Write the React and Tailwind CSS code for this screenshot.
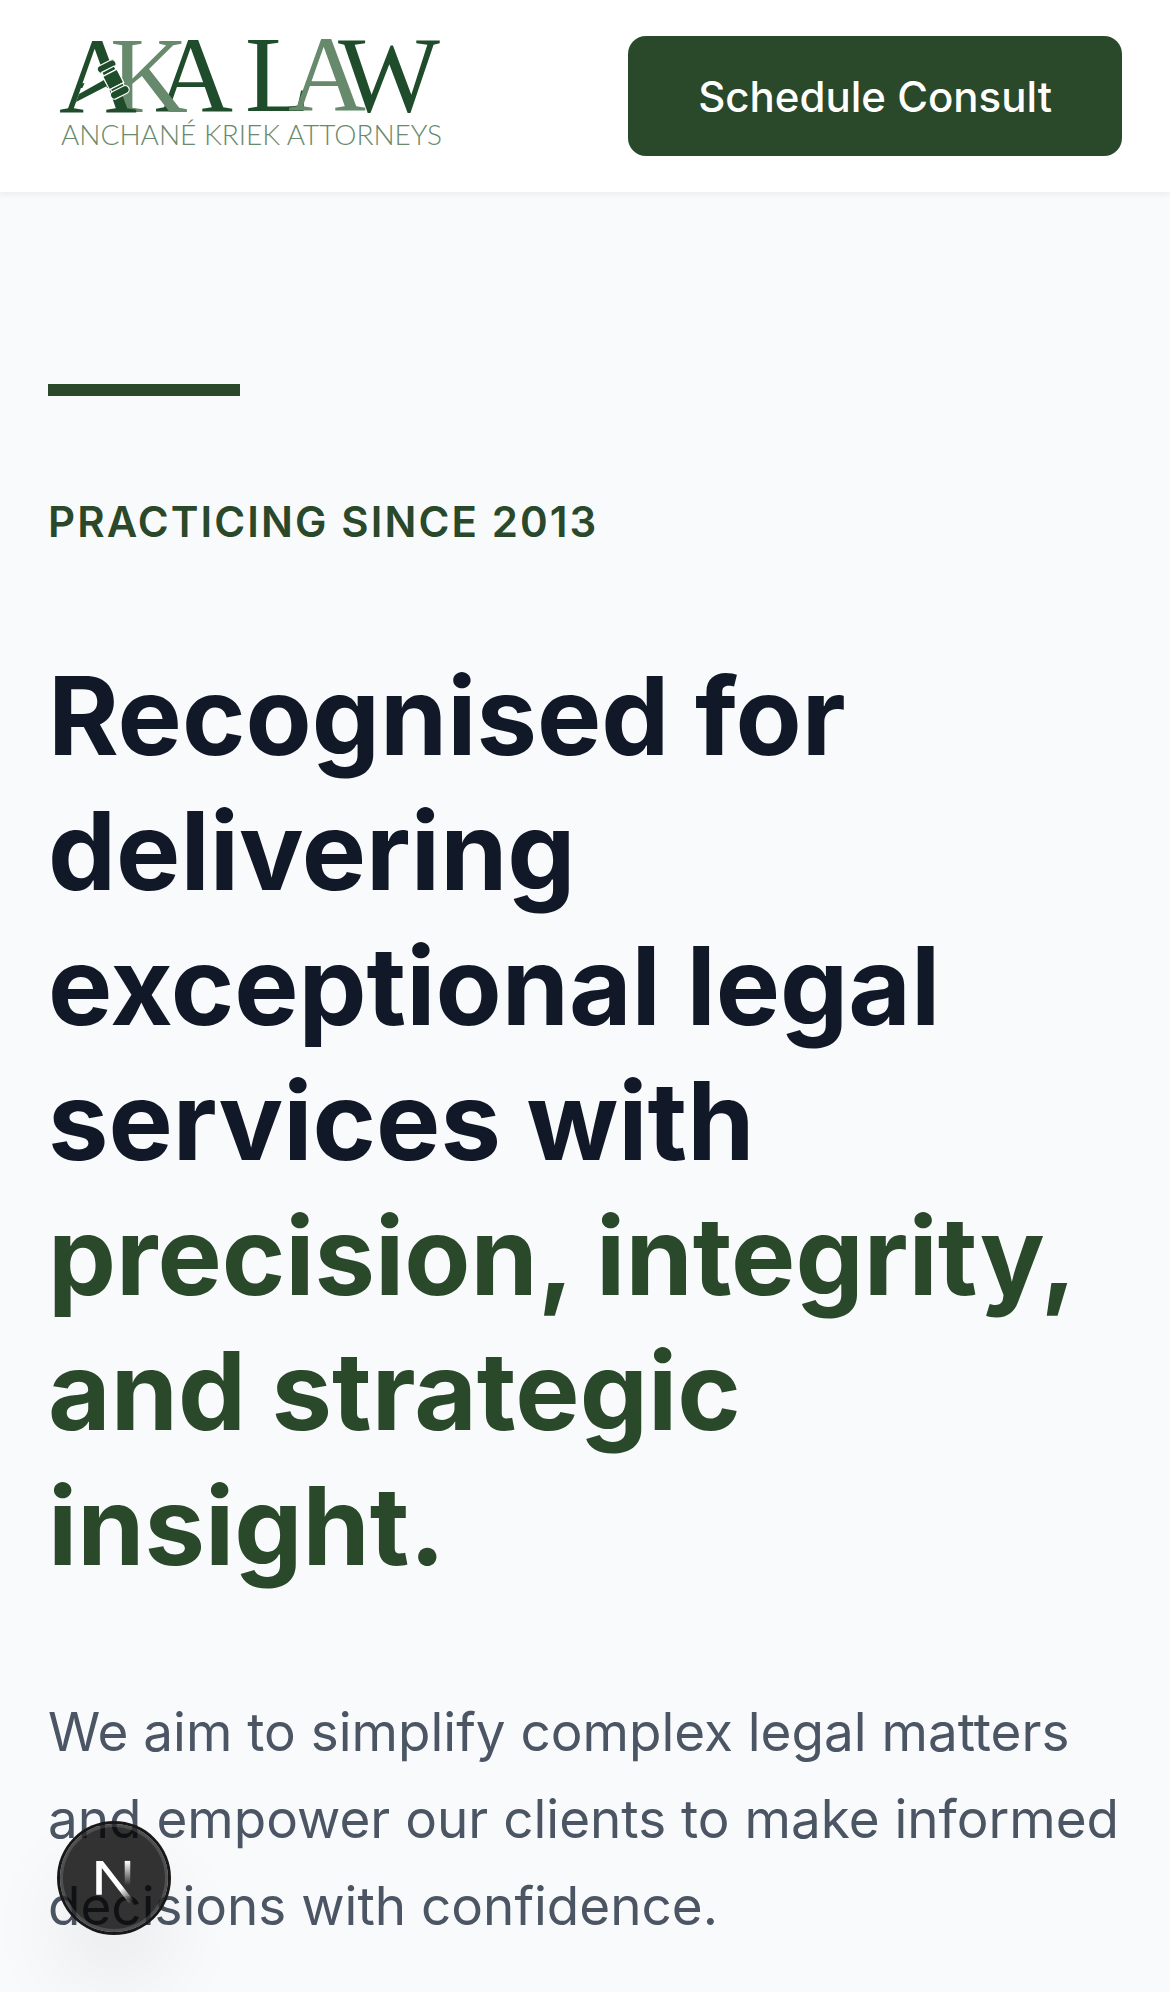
const DARK = "#1f4d2b";
const SOFT = "#688a6c";

function Logo() {
  return (
    <svg
      viewBox="0 0 400 120"
      className="h-[120px] w-[400px] shrink-0"
      role="img"
      aria-label="AKA Law, Anchané Kriek Attorneys"
    >
      <g fontFamily="'Liberation Serif', serif" fontSize="108">
        <text x="107" y="76" fill={DARK}>A</text>
        <text x="62" y="76" fill={SOFT}>K</text>
        <text x="11" y="77" fill={DARK}>A</text>
        <text x="197" y="75" fill={DARK}>L</text>
        <text x="240" y="75" fill={SOFT}>A</text>
        <text x="290" y="75" fill={DARK}>W</text>
      </g>
      <path d="M37 46 H57 L60 55 H33 Z" fill="#ffffff" />
      <path d="M31 58 L56 44 L59 50 L28 66 Z" fill={DARK} />
      <g transform="translate(65 43) rotate(-27)" stroke="#ffffff" strokeWidth="1.2">
        <rect x="-10" y="-18" width="20" height="8" rx="4" fill={DARK} />
        <rect x="-7" y="-11" width="14" height="4" fill={DARK} />
        <rect x="-8" y="-7" width="16" height="15" fill={DARK} />
        <rect x="-7" y="8" width="14" height="4" fill={DARK} />
        <rect x="-10" y="11" width="20" height="8" rx="4" fill={DARK} />
      </g>
      <text
        x="13"
        y="109"
        fill={SOFT}
        fontFamily="Lato, sans-serif"
        fontWeight="300"
        fontSize="28"
      >
        ANCHANÉ KRIEK ATTORNEYS
      </text>
    </svg>
  );
}

function Header() {
  return (
    <header className="flex items-center justify-between bg-white px-12 py-9 shadow-[0_3px_6px_rgba(0,0,0,0.05)]">
      <a href="#home">
        <Logo />
      </a>
      <button
        type="button"
        className="h-[120px] rounded-[18px] bg-[#2a482a] px-[70px] text-[42px] font-medium text-white"
      >
        Schedule Consult
      </button>
    </header>
  );
}

function DevBadge() {
  return (
    <button
      type="button"
      aria-label="Open Next.js Dev Tools"
      className="fixed bottom-[60px] left-[60px] size-[108px] rounded-full bg-black/80 shadow-[0_0_0_3px_#171717,inset_0_0_0_3px_rgba(255,255,255,0.14),0_48px_96px_-24px_rgba(0,0,0,0.24)]"
    >
      <svg viewBox="0 0 108 108" className="size-full" fill="none" aria-hidden="true">
        <defs>
          <linearGradient id="diagonal" gradientUnits="userSpaceOnUse" x1="9.5" y1="10.5" x2="13.2" y2="15.2">
            <stop stopColor="white" />
            <stop offset="1" stopColor="white" stopOpacity="0" />
          </linearGradient>
          <linearGradient id="stem" gradientUnits="userSpaceOnUse" x1="11.8" y1="1.4" x2="11.8" y2="9.4">
            <stop stopColor="white" />
            <stop offset="1" stopColor="white" stopOpacity="0" />
          </linearGradient>
        </defs>
        <g transform="translate(32 33) scale(3)">
          <path d="M1.41 1.3 H3.6 L14 14.7 L12.6 15.8 L3.27 3.7 V12.6 H1.41 Z" fill="url(#diagonal)" />
          <path d="M10.9 1.3 H12.75 V13.1 H10.9 Z" fill="url(#stem)" />
        </g>
      </svg>
    </button>
  );
}

export default function App() {
  return (
    <div className="min-h-screen bg-[#f9fafc] font-['Inter',sans-serif]">
      <Header />
      <main className="px-12 pt-48 pb-12">
        <div className="h-3 w-48 bg-[#2a482a]" />
        <p className="mt-24 text-[42px] leading-[60px] font-semibold tracking-wider text-[#2a482a] uppercase">
          Practicing since 2013
        </p>
        <h1 className="mt-24 text-[108px] leading-[135px] font-bold text-[#111827]">
          Recognised for delivering exceptional legal services with{" "}
          <span className="text-[#2a482a]">precision, integrity, and strategic insight.</span>
        </h1>
        <p className="mt-24 text-[53px] leading-[87px] text-[#4b5563]">
          We aim to simplify complex legal matters and empower our clients to make informed
          decisions with confidence.
        </p>
      </main>
      <DevBadge />
    </div>
  );
}
